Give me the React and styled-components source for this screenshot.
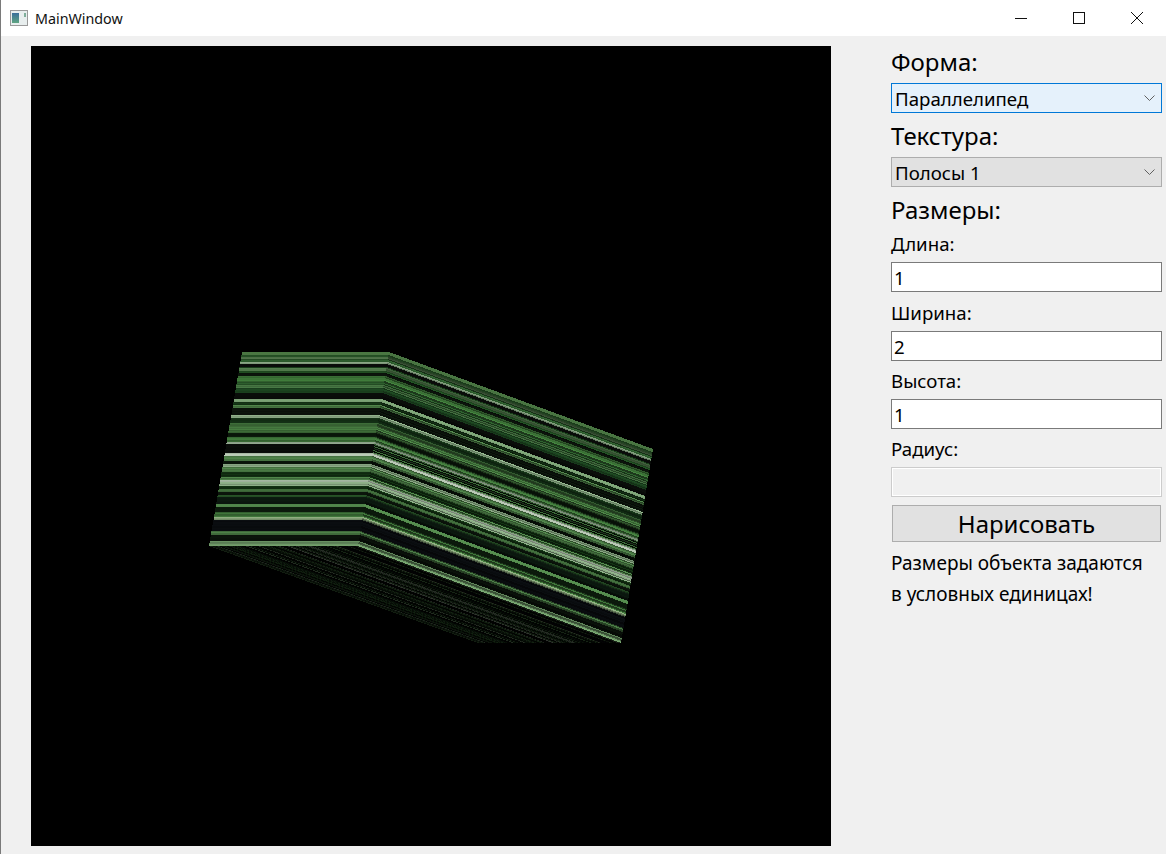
import React from 'react'
import styled, { createGlobalStyle } from 'styled-components'

const GlobalStyle = createGlobalStyle`
  html, body {
    margin: 0;
    padding: 0;
    background: #f0f0f0;
  }
  * {
    box-sizing: border-box;
  }
`

// texture rows measured on the front face: [top y, bottom y, colour]
const STRIPES = [
  [352, 355, '#4c7a44'], [355, 357, '#2a5a2a'], [357, 359, '#5f8a58'], [359, 362, '#2c5a2c'],
  [362, 364, '#8fae8a'], [364, 367, '#0a0d0a'], [367, 368, '#173a18'], [368, 371, '#5f8f58'],
  [371, 373, '#1f4a20'], [373, 376, '#0c150c'], [376, 382, '#3f7a3a'], [382, 385, '#2c5c2c'],
  [385, 388, '#4c8048'], [388, 393, '#1c4520'], [393, 399, '#0a0d0a'], [399, 402, '#7aa074'],
  [402, 405, '#173a18'], [405, 408, '#4f8349'], [408, 415, '#0c150c'], [415, 418, '#8fb089'],
  [418, 423, '#143216'], [423, 433, '#44783e'], [433, 437, '#0c1a0c'], [437, 442, '#3f763a'],
  [442, 444, '#a0b89c'], [444, 453, '#0a0d0a'], [453, 456, '#c0d0bc'], [456, 461, '#4f8349'],
  [461, 464, '#0c1a0c'], [464, 467, '#8fb089'], [467, 472, '#4f8349'], [472, 477, '#123012'],
  [477, 480, '#4f8349'], [480, 482, '#b4c8b0'], [482, 486, '#8fb089'], [486, 489, '#123012'],
  [489, 492, '#3f6a3a'], [492, 495, '#0c150c'], [495, 497, '#2a5a2a'], [497, 504, '#0c1a10'],
  [504, 507, '#4f8349'], [507, 512, '#0c1a0c'], [512, 517, '#3f763a'], [517, 520, '#8fae80'],
  [520, 531, '#0a0d10'], [531, 535, '#4f8349'], [535, 541, '#0c150c'], [541, 546, '#6f9a68'],
]

// repeatable noise so the fine rows of the texture stay the same between renders
const noise = (n) => {
  const x = Math.sin(n * 127.1 + 11.7) * 43758.5453
  return x - Math.floor(x)
}

const shade = (hex, f) => {
  const c = [1, 3, 5].map((i) => Math.min(255, Math.round(parseInt(hex.slice(i, i + 2), 16) * f)))
  return `rgb(${c.join(',')})`
}

const ROWS = STRIPES.flatMap(([top, bottom, color]) =>
  Array.from({ length: bottom - top }, (_, i) => ({ y: top + i, color }))
)

const lerp = (a, b, t) => [a[0] + (b[0] - a[0]) * t, a[1] + (b[1] - a[1]) * t]
const vOf = (y) => (y - 352) / 194

// the wide black band of the front face breaks up into thin lines on the side
const sideColor = (y, color) => (y >= 444 && y < 453 && y % 2 === 0 ? '#3a6e36' : color)

// cube corners in canvas-window coordinates
const FRONT = { tl: [242, 352], tr: [389, 352], bl: [209, 546], br: [358, 546] }
const SIDE = { tl: [389, 352], tr: [653, 449], bl: [358, 546], br: [621, 643] }
const BOTTOM = { tl: [209, 546], tr: [478, 643], bl: [358, 546], br: [621, 643] }

const facePolys = (face, low, high, pick) =>
  ROWS.map(({ y, color }) => {
    const a = lerp(face.tl, face.bl, vOf(y))
    const b = lerp(face.tr, face.br, vOf(y))
    const c = lerp(face.tr, face.br, vOf(y + 1))
    const d = lerp(face.tl, face.bl, vOf(y + 1))
    return {
      color: shade(pick ? pick(y, color) : color, low + (high - low) * noise(y)),
      points: [a, b, c, d].map((p) => p.join(',')).join(' '),
    }
  })

const Face = ({ face, low, high, pick, opacity = 1 }) => (
  <g opacity={opacity}>
    {facePolys(face, low, high, pick).map((s, i) => (
      <polygon key={i} points={s.points} fill={s.color} />
    ))}
  </g>
)

const Cube = () => (
  <CubeSvg viewBox='31 46 800 800' width='800' height='800' shapeRendering='crispEdges'>
    <Face face={BOTTOM} low={0.3} high={1} opacity={0.3} />
    <Face face={SIDE} low={0.42} high={1.15} pick={sideColor} />
    <Face face={FRONT} low={0.78} high={1.04} />
  </CubeSvg>
)

const Chevron = () => (
  <ChevronSvg viewBox='0 0 11 6' width='11' height='6'>
    <path d='M0.5 0.5 L5.5 5.5 L10.5 0.5' fill='none' stroke='#606060' strokeWidth='1' />
  </ChevronSvg>
)

const Combo = ({ value, focused }) => (
  <ComboBox $focused={focused}>
    <span>{value}</span>
    <Chevron />
  </ComboBox>
)

const App = () => {
  return (
    <>
      <GlobalStyle />
      <Window>
        <TitleBar>
          <AppIcon viewBox='0 0 18 16' width='18' height='16'>
            <defs>
              <linearGradient id='ic' x1='0' y1='0' x2='0' y2='1'>
                <stop offset='0' stopColor='#3b6f9a' />
                <stop offset='1' stopColor='#5fa582' />
              </linearGradient>
            </defs>
            <rect x='0.5' y='0.5' width='17' height='15' fill='#e8eeee' stroke='#9a9a9a' />
            <rect x='2' y='3' width='7' height='10' fill='url(#ic)' />
            <rect x='14' y='3' width='2' height='4' fill='#7fae9a' />
          </AppIcon>
          <WindowTitle>MainWindow</WindowTitle>
          <Controls>
            <ControlButton>
              <svg width='12' height='12' viewBox='0 0 12 12'>
                <path d='M0 6.5 H12' stroke='#111' strokeWidth='1' />
              </svg>
            </ControlButton>
            <ControlButton>
              <svg width='12' height='12' viewBox='0 0 12 12'>
                <rect x='0.5' y='0.5' width='11' height='11' fill='none' stroke='#111' />
              </svg>
            </ControlButton>
            <ControlButton>
              <svg width='12' height='12' viewBox='0 0 12 12'>
                <path d='M0 0 L12 12 M12 0 L0 12' stroke='#111' strokeWidth='1' />
              </svg>
            </ControlButton>
          </Controls>
        </TitleBar>
        <Content>
          <Canvas>
            <Cube />
          </Canvas>
          <Panel>
            <Heading $height={37}>Форма:</Heading>
            <Combo value='Параллелипед' focused />
            <Heading $height={44}>Текстура:</Heading>
            <Combo value='Полосы 1' />
            <Heading $height={44}>Размеры:</Heading>
            <FieldLabel $height={31}>Длина:</FieldLabel>
            <Field defaultValue='1' />
            <FieldLabel $height={39}>Ширина:</FieldLabel>
            <Field defaultValue='2' />
            <FieldLabel $height={38}>Высота:</FieldLabel>
            <Field defaultValue='1' />
            <FieldLabel $height={38}>Радиус:</FieldLabel>
            <Field disabled />
            <DrawButton>Нарисовать</DrawButton>
            <Note>
              Размеры объекта задаются
              <br />в условных единицах!
            </Note>
          </Panel>
        </Content>
      </Window>
    </>
  )
}
export default App

const FONT = `'Noto Sans', 'Open Sans', sans-serif`

const Window = styled.div`
  width: 1166px;
  height: 854px;
  overflow: hidden;
  display: flex;
  flex-direction: column;
  background: #f0f0f0;
  border-left: 1px solid #7a7a7a;
  font-family: ${FONT};
  color: #000;
`

const TitleBar = styled.div`
  height: 36px;
  flex: none;
  display: flex;
  align-items: center;
  background: #fff;
  padding-left: 9px;
`

const AppIcon = styled.svg`
  flex: none;
  margin-right: 7px;
`

const WindowTitle = styled.span`
  font-size: 14.3px;
  color: #111;
`

const Controls = styled.div`
  margin-left: auto;
  display: flex;
  height: 100%;
`

const ControlButton = styled.div`
  width: 58px;
  height: 100%;
  display: flex;
  align-items: center;
  justify-content: center;
`

const Content = styled.div`
  flex: 1;
  display: flex;
  gap: 60px;
  padding: 10px 4px 8px 30px;
`

const Canvas = styled.div`
  width: 800px;
  height: 800px;
  flex: none;
  background: #000;
`

const CubeSvg = styled.svg`
  display: block;
`

const Panel = styled.div`
  width: 271px;
  flex: none;
  display: flex;
  flex-direction: column;
`

const Heading = styled.div`
  height: ${(props) => props.$height}px;
  display: flex;
  align-items: flex-end;
  padding-bottom: 5px;
  font-size: 24px;
  line-height: 32px;
`

const FieldLabel = styled.div`
  height: ${(props) => props.$height}px;
  display: flex;
  align-items: flex-end;
  padding-bottom: 5px;
  font-size: 18.67px;
  line-height: 26px;
`

const ComboBox = styled.div`
  height: 30px;
  flex: none;
  display: flex;
  align-items: center;
  justify-content: space-between;
  padding: 0 6px 0 3px;
  font-size: 18.67px;
  background: ${(props) => (props.$focused ? '#e5f1fb' : '#e1e1e1')};
  border: 1px solid ${(props) => (props.$focused ? '#0078d7' : '#adadad')};
`

const ChevronSvg = styled.svg`
  flex: none;
`

const Field = styled.input`
  height: 30px;
  width: 100%;
  flex: none;
  padding: 0 0 0 2px;
  font-family: inherit;
  font-size: 18.67px;
  color: #000;
  outline: none;
  background: #fff;
  border: 1px solid #7a7a7a;
  &:disabled {
    background: #f0f0f0;
    border-color: #cccccc;
    box-shadow: inset 0 0 0 1px #fff;
  }
`

const DrawButton = styled.button`
  height: 37px;
  flex: none;
  margin: 8px 1px 0;
  padding: 0;
  font-family: inherit;
  font-size: 24px;
  color: #000;
  background: #e1e1e1;
  border: 1px solid #adadad;
`

const Note = styled.div`
  margin-top: 6px;
  font-size: 19px;
  line-height: 31px;
`
